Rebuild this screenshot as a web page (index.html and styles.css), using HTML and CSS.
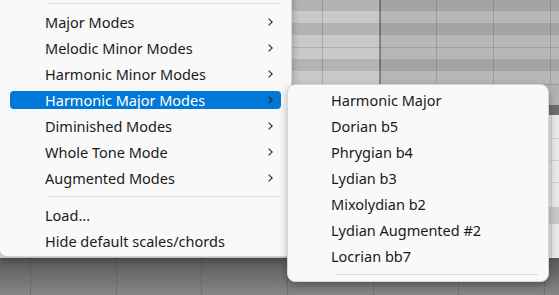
FILE: index.html
```html
<!DOCTYPE html>
<html>
<head>
<meta charset="utf-8">
<link rel="stylesheet" href="styles.css">
</head>
<body>
<div class="app">
  <div class="roll"></div>
  <div class="strip"></div>
  <div class="bar"></div>
  <div class="panel"></div>
  <div class="lower">
    <div class="cell"></div><div class="cell"></div><div class="cell"></div><div class="cell"></div><div class="cell"></div><div class="cell"></div><div class="cell"></div>
  </div>

  <div class="menu menu-main">
    <div class="sep"></div>
    <div class="item"><span>Major Modes</span><svg class="chev" width="5" height="8" viewBox="0 0 5 8"><polyline points="0.6,0.6 4.2,4 0.6,7.4"/></svg></div>
    <div class="item"><span>Melodic Minor Modes</span><svg class="chev" width="5" height="8" viewBox="0 0 5 8"><polyline points="0.6,0.6 4.2,4 0.6,7.4"/></svg></div>
    <div class="item"><span>Harmonic Minor Modes</span><svg class="chev" width="5" height="8" viewBox="0 0 5 8"><polyline points="0.6,0.6 4.2,4 0.6,7.4"/></svg></div>
    <div class="item active"><span>Harmonic Major Modes</span><svg class="chev" width="5" height="8" viewBox="0 0 5 8"><polyline points="0.6,0.6 4.2,4 0.6,7.4"/></svg></div>
    <div class="item"><span>Diminished Modes</span><svg class="chev" width="5" height="8" viewBox="0 0 5 8"><polyline points="0.6,0.6 4.2,4 0.6,7.4"/></svg></div>
    <div class="item"><span>Whole Tone Mode</span><svg class="chev" width="5" height="8" viewBox="0 0 5 8"><polyline points="0.6,0.6 4.2,4 0.6,7.4"/></svg></div>
    <div class="item"><span>Augmented Modes</span><svg class="chev" width="5" height="8" viewBox="0 0 5 8"><polyline points="0.6,0.6 4.2,4 0.6,7.4"/></svg></div>
    <div class="sep"></div>
    <div class="item"><span>Load...</span></div>
    <div class="item"><span>Hide default scales/chords</span></div>
  </div>

  <div class="menu menu-sub">
    <div class="item"><span>Harmonic Major</span></div>
    <div class="item"><span>Dorian b5</span></div>
    <div class="item"><span>Phrygian b4</span></div>
    <div class="item"><span>Lydian b3</span></div>
    <div class="item"><span>Mixolydian b2</span></div>
    <div class="item"><span>Lydian Augmented #2</span></div>
    <div class="item"><span>Locrian bb7</span></div>
    <div class="sep"></div>
  </div>
</div>
</body>
</html>
```
FILE: styles.css
```css
html, body {
  margin: 0;
  padding: 0;
}

body {
  width: 559px;
  height: 295px;
  overflow: hidden;
  background: #6a6a6a;
}

.app {
  position: relative;
  width: 559px;
  height: 295px;
  display: flex;
  flex-direction: column;
  font-family: "Noto Sans", "Open Sans", sans-serif;
  overflow: hidden;
}

.roll {
  height: 84px;
  flex: none;
  background-image:
    linear-gradient(to right,
      transparent 322px, rgba(0,0,0,0.16) 322px 323px,
      transparent 323px 379px, rgba(0,0,0,0.32) 379px 381px,
      transparent 381px 436px, rgba(0,0,0,0.14) 436px 437px,
      transparent 437px 493px, rgba(0,0,0,0.14) 493px 494px,
      transparent 494px 550px, rgba(0,0,0,0.14) 550px 551px,
      transparent 551px),
    linear-gradient(to bottom, transparent 47px, rgba(0,0,0,0.12) 47px 48px, transparent 48px),
    linear-gradient(to right, transparent 380px, rgba(0,0,0,0.09) 380px),
    linear-gradient(to bottom,
      #b3b3b3 0 11px, #c9c9c9 11px 23px, #b3b3b3 23px 35px,
      #c9c9c9 35px 59px, #b3b3b3 59px 71px, #c9c9c9 71px 84px);
}

.strip {
  height: 21px;
  flex: none;
  background: #b3b3b3;
  border-top: 1px solid #9c9c9c;
  box-sizing: border-box;
}

.bar {
  height: 10px;
  flex: none;
  background: #6e6e6e;
}

.panel {
  height: 143px;
  flex: none;
  background-image:
    linear-gradient(to bottom,
      transparent 23px, #cfcfcf 23px 24px,
      transparent 24px 45px, #cfcfcf 45px 46px,
      transparent 46px 67px, #cfcfcf 67px 68px,
      transparent 68px 92px, #c8c8c8 92px 109px,
      transparent 109px),
    linear-gradient(to right, transparent 551px, #cfcfcf 551px 552px, transparent 552px);
  background-color: #e8e8e8;
}

.lower {
  flex: 1;
  display: flex;
  padding-left: 30px;
  background: linear-gradient(to bottom, #595959, #868686);
}

.cell {
  width: 85.7px;
  flex: none;
  border-left: 1px dotted rgba(0, 0, 0, 0.22);
  box-sizing: border-box;
}

/* menus */
.menu {
  position: absolute;
  box-sizing: border-box;
  display: flex;
  flex-direction: column;
  background: #f9f9f9;
  border: 1px solid #d6d6d6;
  box-shadow: 0 3px 9px rgba(0, 0, 0, 0.28);
  overflow: hidden;
}

.menu-main {
  left: -1px;
  top: -10px;
  width: 293px;
  height: 267px;
  padding-top: 7px;
  border-radius: 0 0 8px 8px;
}

.menu-sub {
  left: 287px;
  top: 84px;
  width: 262px;
  height: 198px;
  padding-top: 2px;
  border-radius: 8px;
}

.sep {
  flex: none;
  height: 1px;
  margin: 5px 10px 5px 48px;
  background: #dcdcdc;
}

.item {
  flex: none;
  height: 18px;
  margin: 4px 10px;
  padding: 0 8px 0 35px;
  display: flex;
  align-items: center;
  justify-content: space-between;
  border-radius: 4px;
  font-size: 14.5px;
  line-height: 18px;
  color: #1a1a1a;
  white-space: nowrap;
}

.menu-sub .item {
  padding-left: 33px;
}

.item.active {
  background: #0078d7;
  color: #ffffff;
}

.chev {
  flex: none;
  display: block;
}

.chev polyline {
  fill: none;
  stroke: #2a2a2a;
  stroke-width: 1.1;
}
```
